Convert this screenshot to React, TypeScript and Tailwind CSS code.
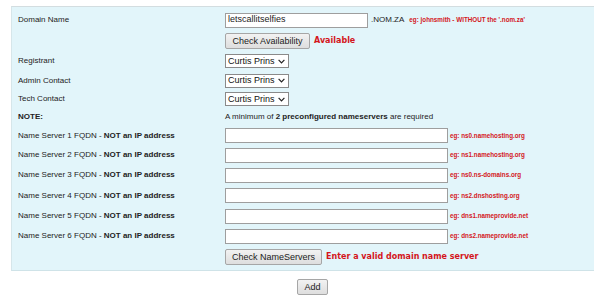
import { ReactNode } from "react";

const hints = [
  "eg: ns0.namehosting.org",
  "eg: ns1.namehosting.org",
  "eg: ns0.ns-domains.org",
  "eg: ns2.dnshosting.org",
  "eg: dns1.nameprovide.net",
  "eg: dns2.nameprovide.net",
];

const nsHeights = ["h-[19px]", "h-[20px]", "h-[20px]", "h-[21px]", "h-[20px]", "h-[20px]"];

function Row({ h, label, children }: { h: string; label?: ReactNode; children?: ReactNode }) {
  return (
    <div className={`flex items-center ${h}`}>
      <div className="w-[207px] shrink-0 text-[8px] text-[#222]">{label}</div>
      <div className="flex items-center">{children}</div>
    </div>
  );
}

function Btn({ children, w }: { children: ReactNode; w: string }) {
  return (
    <button
      className={`${w} h-[16px] flex items-center justify-center rounded-[2px] border border-[#a6a6a6] bg-gradient-to-b from-[#f2f2f2] to-[#dedede] font-['Liberation_Sans',Arial,sans-serif] text-[9px] leading-none text-[#222]`}
    >
      {children}
    </button>
  );
}

function FakeSelect() {
  return (
    <div className="flex h-[14px] w-[64px] items-center justify-between border border-[#8a8a8a] bg-white pl-[2px] pr-[3px] text-[9px] leading-none text-[#111]">
      <span>Curtis Prins</span>
      <svg width="7" height="5" viewBox="0 0 7 5" fill="none">
        <path d="M0.6 0.8 L3.5 3.8 L6.4 0.8" stroke="#222" strokeWidth="1.2" />
      </svg>
    </div>
  );
}

export default function App() {
  return (
    <div className="w-[594px] h-[300px] overflow-hidden bg-white font-['Liberation_Sans',Arial,sans-serif]">
      <div className="ml-[11px] mt-[6px] border border-r-0 border-t-[#d3dde0] border-l-[#d6e6ea] border-b-[#cfe3e8] bg-[#e2f5fa] pl-[6px] pt-[2px] pb-[2px]">
        <Row h="h-[22px]" label="Domain Name">
          <div className="flex h-[15px] w-[143px] items-center border border-[#9e9e9e] bg-white pl-[2px] text-[9px] text-[#222]">
            letscallitselfies
          </div>
          <span className="ml-[3px] text-[8px] text-[#222]">.NOM.ZA</span>
          <span className="ml-[5px] text-[6.3px] font-bold text-[#d4151c]">
            eg: johnsmith - WITHOUT the '.nom.za'
          </span>
        </Row>
        <Row h="h-[20px]">
          <Btn w="w-[85px]">Check Availability</Btn>
          <span className="ml-[4px] font-['DejaVu_Sans',Verdana,sans-serif] text-[8px] font-bold text-[#d4151c]">
            Available
          </span>
        </Row>
        <Row h="h-[20px]" label="Registrant">
          <FakeSelect />
        </Row>
        <Row h="h-[19px]" label="Admin Contact">
          <FakeSelect />
        </Row>
        <Row h="h-[18px]" label="Tech Contact">
          <FakeSelect />
        </Row>
        <Row h="h-[18px]" label={<b>NOTE:</b>}>
          <span className="text-[8px] text-[#222]">
            A minimum of <b>2 preconfigured nameservers</b> are required
          </span>
        </Row>
        {hints.map((hint, i) => (
          <Row
            key={hint}
            h={nsHeights[i]}
            label={
              <>
                Name Server {i + 1} FQDN - <b>NOT an IP address</b>
              </>
            }
          >
            <div className="h-[15px] w-[223px] border border-[#9e9e9e] bg-white" />
            <span className="ml-[2px] text-[6.3px] font-bold text-[#d4151c]">{hint}</span>
          </Row>
        ))}
        <Row h="h-[22px]">
          <Btn w="w-[97px]">Check NameServers</Btn>
          <span className="ml-[4px] font-['DejaVu_Sans',Verdana,sans-serif] text-[8px] font-bold text-[#d4151c]">
            Enter a valid domain name server
          </span>
        </Row>
      </div>
      <div className="mt-[8px] pl-[297px]">
        <Btn w="w-[31px]">Add</Btn>
      </div>
    </div>
  );
}
